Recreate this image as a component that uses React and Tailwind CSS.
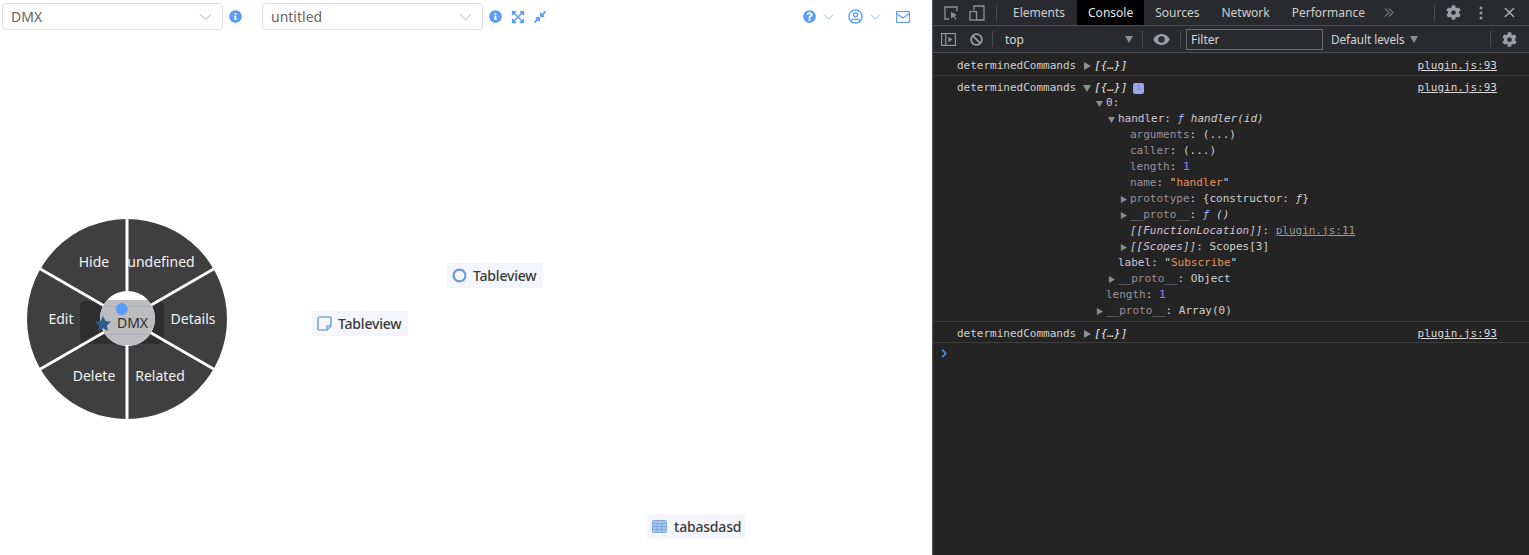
import React from 'react';
import {
  FaInfoCircle,
  FaExpandArrowsAlt,
  FaCompressAlt,
  FaQuestionCircle,
  FaRegUserCircle,
  FaCog,
} from 'react-icons/fa';

const Chevron = ({ className }) => (
  <svg viewBox="0 0 14 8" className={className} fill="none" stroke="currentColor" strokeWidth="1.2">
    <path d="M1 1l6 6 6-6" />
  </svg>
);

const Select = ({ label }) => (
  <div className="flex h-[27px] w-[221px] items-center justify-between rounded border border-[#dedee8] bg-white pl-2 pr-[10px] text-sm text-[#666]">
    <span>{label}</span>
    <Chevron className="h-[8px] w-[13px] text-[#c8c8d0]" />
  </div>
);

const Node = ({ className, icon, label }) => (
  <div className={`absolute flex h-[25px] items-center bg-[#f4f6fb] text-sm font-medium tracking-[-0.2px] text-[#3a3a3a] ${className}`}>
    {icon}
    <span>{label}</span>
  </div>
);

const PieMenu = () => (
  <svg viewBox="0 0 200 200" className="absolute left-[27px] top-[219px] h-[200px] w-[200px] font-['Noto_Sans',sans-serif]">
    <defs>
      <clipPath id="hub">
        <circle cx="100.5" cy="99.5" r="27.5" />
      </clipPath>
    </defs>
    <circle cx="100" cy="100" r="100" fill="#3f3f3f" />
    <rect x="53" y="82" width="84" height="43" rx="6" fill="#000" fillOpacity="0.25" />
    <g stroke="#fff" strokeWidth="3">
      <path d="M100 0v200" />
      <path d="M13.4 50l173.2 100" strokeWidth="2.6" />
      <path d="M186.6 50L13.4 150" strokeWidth="2.6" />
    </g>
    <g fill="#f2f2f2" fontSize="14" textAnchor="middle">
      <text x="67" y="48">Hide</text>
      <text x="134" y="48">undefined</text>
      <text x="166" y="105">Details</text>
      <text x="133" y="162">Related</text>
      <text x="67" y="162">Delete</text>
      <text x="34" y="105">Edit</text>
    </g>
    <circle cx="100.5" cy="99.5" r="27.5" fill="#fff" />
    <g clipPath="url(#hub)">
      <rect x="70" y="81" width="60" height="45" fill="#bdbdbf" />
      <rect x="70" y="87" width="60" height="1" fill="#b0b0b8" />
      <rect x="70" y="115" width="60" height="1" fill="#b0b0b8" />
    </g>
    <polygon
      points="76,97 78.400,102 84,102.700 79.900,106.500 81,112 76,109.300 71,112 72.100,106.500 68,102.700 73.600,102"
      fill="#2f5b8f"
    />
    <text x="105.500" y="109" fontSize="14" fill="#2e2e2e" textAnchor="middle">DMX</text>
    <circle cx="94.700" cy="90" r="6" fill="#5b9dfb" />
  </svg>
);

const Tri = ({ down, className = 'h-[8px] w-[8px]' }) => (
  <svg viewBox="0 0 8 8" className={`shrink-0 ${className}`} fill="#8f8f8f">
    {down ? <polygon points="0,1 8,1 4,8" /> : <polygon points="1,0 8,4 1,8" />}
  </svg>
);

const Tree = ({ pad, arrow, children }) => (
  <div className={`flex h-4 items-center whitespace-pre ${pad}`}>
    <span className="flex w-[12px] shrink-0 items-center">
      {arrow === 'right' && <Tri className="ml-[2px] h-[7px] w-[7px]" />}
      {arrow === 'down' && <Tri down className="ml-[2px] h-[7px] w-[7px]" />}
    </span>
    {children}
  </div>
);

const Dim = ({ children }) => <span className="text-[#9a8f9c]">{children}</span>;
const Key = ({ children }) => <span className="text-[#d3c3d8]">{children}</span>;
const Num = ({ children }) => <span className="text-[#9980ff]">{children}</span>;
const Str = ({ children }) => <span className="text-[#e5925a]">{children}</span>;

const LogHead = ({ open, badge }) => (
  <div className="flex h-[22px] items-center pl-[24px] pr-[32px] pt-[2px]">
    <span>determinedCommands</span>
    <Tri down={open} className="ml-[7px] h-[8px] w-[8px]" />
    <span className="ml-[3px] italic text-[#e8e8e8]">{'[{…}]'}</span>
    {badge && (
      <span className="ml-[6px] flex h-[11px] w-[11px] items-center justify-center rounded-[2px] bg-[#9aa5f0] text-[8px] leading-none text-[#6f7ad0]">
        i
      </span>
    )}
    <span className="ml-auto text-[#d8d8d8] underline">plugin.js:93</span>
  </div>
);

const Tab = ({ label, active }) => (
  <div className={`flex h-full items-center px-[11px] pt-[1px] ${active ? 'ml-px bg-black text-[#e6e6e6]' : 'text-[#cfcfcf]'}`}>{label}</div>
);

const Sep = ({ className = '' }) => <div className={`h-[16px] w-px bg-[#494c50] ${className}`} />;

const DevTools = () => (
  <div className="flex h-full w-[597px] shrink-0 flex-col border-l border-[#555] bg-[#242424] font-['DejaVu_Sans_Mono',monospace] text-[11px] text-[#d0d0d0]">
    <div className="flex h-[26px] shrink-0 items-center border-b border-[#494c50] bg-[#292a2d] font-['Noto_Sans',sans-serif] text-xs">
      <svg viewBox="0 0 16 16" className="ml-[10px] h-4 w-4 text-[#8f9296]" fill="none" stroke="currentColor" strokeWidth="1.3">
        <path d="M6 14H2V2h12v4" />
        <path d="M8 7l6 3-2.600 1 2.200 3-1.100.8-2.200-3L8 13.500z" fill="currentColor" stroke="none" />
      </svg>
      <svg viewBox="0 0 16 16" className="ml-[10px] h-4 w-4 text-[#8f9296]" fill="none" stroke="currentColor" strokeWidth="1.3">
        <path d="M5 5V1h10v14H8" />
        <rect x="1" y="6.500" width="6.500" height="8.500" />
      </svg>
      <Sep className="ml-[11px] mr-[5px]" />
      <Tab label="Elements" />
      <Tab label="Console" active />
      <Tab label="Sources" />
      <Tab label="Network" />
      <Tab label="Performance" />
      <svg viewBox="0 0 10 9" className="ml-[8px] h-[9px] w-[10px] text-[#a8abaf]" fill="none" stroke="currentColor" strokeWidth="1">
        <path d="M1 .5l4 4-4 4M5 .5l4 4-4 4" />
      </svg>
      <Sep className="ml-auto" />
      <FaCog className="ml-[11px] h-[15px] w-[15px] text-[#9a9da1]" />
      <svg viewBox="0 0 4 14" className="ml-[18px] h-[14px] w-[4px] text-[#9a9da1]" fill="currentColor">
        <circle cx="2" cy="2" r="1.500" />
        <circle cx="2" cy="7" r="1.500" />
        <circle cx="2" cy="12" r="1.500" />
      </svg>
      <svg viewBox="0 0 12 12" className="ml-[21px] mr-[14px] h-[11px] w-[11px] text-[#a8abaf]" stroke="currentColor" strokeWidth="1.6">
        <path d="M1 1l10 10M11 1L1 11" />
      </svg>
    </div>

    <div className="flex h-[27px] shrink-0 items-center border-b border-[#494c50] bg-[#292a2d] font-['Noto_Sans',sans-serif] text-xs">
      <svg viewBox="0 0 16 14" className="ml-[8px] h-[13px] w-[15px] text-[#9a9da1]" fill="none" stroke="currentColor" strokeWidth="1.2">
        <rect x="0.600" y="0.600" width="14.800" height="12.800" />
        <path d="M5 1v12" />
        <path d="M8 4l4 3-4 3z" fill="currentColor" stroke="none" />
      </svg>
      <svg viewBox="0 0 14 14" className="ml-[14px] h-[13px] w-[13px] text-[#9a9da1]" fill="none" stroke="currentColor" strokeWidth="1.8">
        <circle cx="7" cy="7" r="5.800" />
        <path d="M3 3l8 8" />
      </svg>
      <Sep className="ml-[9px]" />
      <span className="ml-[12px] w-[120px] pt-[1px] text-[#d5d5d5]">top</span>
      <Tri down />
      <Sep className="ml-[9px]" />
      <svg viewBox="0 0 18 12" className="ml-[10px] h-[11px] w-[17px] text-[#9a9da1]" fill="currentColor">
        <path fillRule="evenodd" d="M9 0c4 0 7.300 2.500 9 6-1.700 3.500-5 6-9 6s-7.300-2.500-9-6c1.700-3.500 5-6 9-6zm0 2.500a3.500 3.500 0 100 7 3.500 3.500 0 000-7z" />
      </svg>
      <Sep className="ml-[10px]" />
      <div className="ml-[5px] flex h-[21px] w-[137px] items-center border border-[#6a6d72] pl-1 pt-[1px] text-[#d5d5d5]">Filter</div>
      <span className="ml-[8px] w-[74px] whitespace-nowrap pt-[1px] text-[11.700px] text-[#d5d5d5]">Default levels</span>
      <Tri down className="ml-[5px] h-[8px] w-[8px]" />
      <Sep className="ml-auto" />
      <FaCog className="ml-[11px] mr-[12px] h-[15px] w-[15px] text-[#9a9da1]" />
    </div>

    <div className="h-[23px] border-b border-[#3c3c3c] pt-[1px]">
      <LogHead />
    </div>

    <div className="border-b border-[#3c3c3c] pb-[2px]">
      <LogHead open badge />
      <div className="-mt-[3px] pl-[161px]">
        <Tree arrow="down"><Key>0</Key>:</Tree>
        <Tree pad="pl-[12px]" arrow="down">
          <Key>handler</Key>: <span className="italic"><span className="text-[#a8b8ff]">ƒ</span> handler(id)</span>
        </Tree>
        <Tree pad="pl-[24px]"><Dim>arguments</Dim>: (...)</Tree>
        <Tree pad="pl-[24px]"><Dim>caller</Dim>: (...)</Tree>
        <Tree pad="pl-[24px]"><Dim>length</Dim>: <Num>1</Num></Tree>
        <Tree pad="pl-[24px]"><Dim>name</Dim>: "<Str>handler</Str>"</Tree>
        <Tree pad="pl-[24px]" arrow="right"><Dim>prototype</Dim>: {'{constructor: '}<span className="italic">ƒ</span>{'}'}</Tree>
        <Tree pad="pl-[24px]" arrow="right"><Dim>__proto__</Dim>: <span className="italic"><span className="text-[#a8b8ff]">ƒ</span> ()</span></Tree>
        <Tree pad="pl-[24px]">
          <span className="italic text-[#d3c3d8]">[[FunctionLocation]]</span>: <span className="text-[#9a9a9a] underline">plugin.js:11</span>
        </Tree>
        <Tree pad="pl-[24px]" arrow="right"><span className="italic text-[#d3c3d8]">[[Scopes]]</span>: Scopes[3]</Tree>
        <Tree pad="pl-[12px]"><Key>label</Key>: "<Str>Subscribe</Str>"</Tree>
        <Tree pad="pl-[12px]" arrow="right"><Dim>__proto__</Dim>: Object</Tree>
        <Tree><Dim>length</Dim>: <Num>1</Num></Tree>
        <Tree arrow="right"><Dim>__proto__</Dim>: Array(0)</Tree>
      </div>
    </div>

    <div className="h-[21px] border-b border-[#3c3c3c]">
      <LogHead />
    </div>

    <div className="flex h-[20px] items-center pl-[8px]">
      <svg viewBox="0 0 6 10" className="h-[9px] w-[6px] text-[#4d8ff0]" fill="none" stroke="currentColor" strokeWidth="1.8">
        <path d="M1 1l4 4-4 4" />
      </svg>
    </div>
  </div>
);

export default function App() {
  return (
    <div className="flex h-[555px] w-[1529px] overflow-hidden bg-white font-['Noto_Sans',sans-serif]">
      <div className="relative h-full w-[932px] shrink-0">
        <div className="flex items-start justify-between pl-[2px] pr-[22px] pt-[3px]">
          <div className="flex h-[27px] items-center">
            <Select label="DMX" />
            <FaInfoCircle className="ml-[6px] h-[13px] w-[13px] text-[#5b9dfb]" />
            <div className="ml-[20px]">
              <Select label="untitled" />
            </div>
            <FaInfoCircle className="ml-[6px] h-[13px] w-[13px] text-[#5b9dfb]" />
            <FaExpandArrowsAlt className="ml-[9px] h-[14px] w-[14px] text-[#5b9dfb]" />
            <FaCompressAlt className="ml-[8px] h-[14px] w-[14px] text-[#5b9dfb]" />
          </div>
          <div className="flex h-[27px] items-center text-[#5b9dfb]">
            <FaQuestionCircle className="h-[13px] w-[13px]" />
            <Chevron className="ml-[7px] h-[6px] w-[11px] text-[#8db9fb]" />
            <FaRegUserCircle className="ml-[14px] h-[15px] w-[15px]" />
            <Chevron className="ml-[7px] h-[6px] w-[11px] text-[#8db9fb]" />
            <svg viewBox="0 0 14 12" className="ml-[15px] h-[12px] w-[14px]" fill="none" stroke="currentColor" strokeWidth="1.100">
              <rect x="0.600" y="0.600" width="12.800" height="10.800" />
              <path d="M.6 2.500l6.400 4.500 6.400-4.500" />
            </svg>
          </div>
        </div>

        <PieMenu />

        <Node
          className="left-[447px] top-[263px] w-[96px] gap-[6px] pl-[5px]"
          icon={
            <svg viewBox="0 0 15 15" className="h-[15px] w-[15px] text-[#6b9bd8]" fill="none" stroke="currentColor" strokeWidth="2.200">
              <circle cx="7.500" cy="7.500" r="5.900" />
            </svg>
          }
          label="Tableview"
        />
        <Node
          className="left-[312px] top-[311px] w-[96px] gap-[6px] pl-[5px]"
          icon={
            <svg viewBox="0 0 15 15" className="h-[15px] w-[15px] text-[#7fa8de]" fill="none" stroke="currentColor" strokeWidth="1.700">
              <path d="M2.500 1h10a1.500 1.500 0 011.500 1.500V10l-4 4H2.500A1.500 1.500 0 011 12.500v-10A1.500 1.500 0 012.500 1z" />
              <path d="M14 10h-4v4" />
            </svg>
          }
          label="Tableview"
        />
        <Node
          className="left-[647px] top-[514px] w-[98px] gap-[7px] pl-[5px]"
          icon={
            <svg viewBox="0 0 15 13" className="h-[13px] w-[15px] text-[#7da9e0]" fill="none" stroke="currentColor" strokeWidth="1">
              <rect x="0.500" y="0.500" width="14" height="12" rx="1" fill="#a9c7ec" />
              <path d="M.5 3.500h14M.5 6.500h14M.5 9.500h14M5.200 3.500v9M9.800 3.500v9" />
            </svg>
          }
          label="tabasdasd"
        />
      </div>
      <DevTools />
    </div>
  );
}
